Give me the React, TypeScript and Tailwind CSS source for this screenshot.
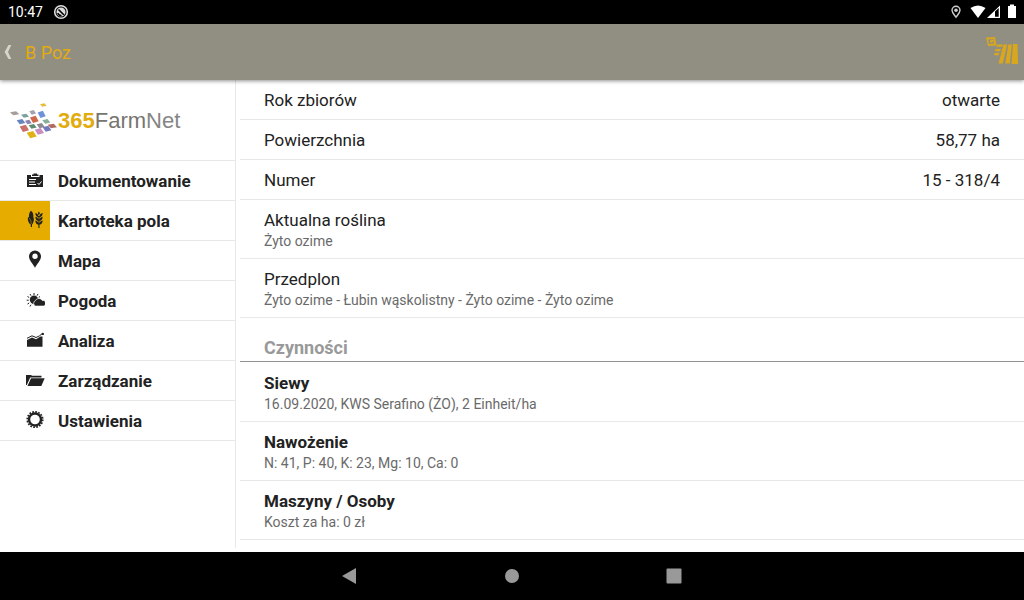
import type { ReactNode } from "react";
import { clsx } from "clsx";

const menu: { label: string; active?: boolean; icon: ReactNode }[] = [
  {
    label: "Dokumentowanie",
    icon: (
      <>
        <path fill="currentColor" d="M2 5h4v2h8.500V5H18v12H2z" />
        <path fill="currentColor" d="M7 4.500h1.500v-1h3.500v1h1.500V6H7z" />
        <path stroke="#fff" strokeWidth="1" fill="none" d="M4 9.500h7M4 12h6M4 14.500h7M12.500 13l1.500 1.500 2.500-3" />
      </>
    ),
  },
  {
    label: "Kartoteka pola",
    active: true,
    icon: (
      <>
        <path fill="currentColor" d="M6 .7c2 1.200 2.600 4 2.300 6.500 1 1.200.8 5-1.300 7.300v2.500H5.800v-2.500C3.500 13.500 2.400 9.500 3 7c.4 0 .8.300 1 .7C3.800 4.500 4.300 2 6 .7z" />
        <path stroke="#e6ad00" strokeWidth=".5" fill="none" d="M4 8c1.800 1.500 2 3.500 2.300 6" />
        <path fill="currentColor" d="M13.900 1.500c1.200 1.200 1.200 2.500 0 3.800-1.200-1.300-1.200-2.600 0-3.800zM10.400 3c2.300.4 3.200 1.900 3.100 4.200-2.300-.3-3.200-1.900-3.100-4.200zM17.600 3c-2.300.4-3.300 1.900-3.200 4.200 2.300-.3 3.300-1.900 3.200-4.200zM10.400 6.700c2.300.4 3.200 2 3.100 4.200-2.300-.3-3.200-2-3.100-4.200zM17.600 6.700c-2.300.4-3.300 2-3.200 4.200 2.300-.3 3.300-2 3.200-4.200zM10.400 10.500c2.300.4 3.200 2 3.100 4.200-2.300-.3-3.200-2-3.100-4.200zM17.600 10.500c-2.300.4-3.300 2-3.200 4.200 2.300-.3 3.300-2 3.200-4.200zM13.400 6h1.100v12h-1.100z" />
      </>
    ),
  },
  {
    label: "Mapa",
    icon: (
      <path
        fill="currentColor"
        fillRule="evenodd"
        d="M10 .4a6 6 0 0 1 6 6c0 3.600-3.700 7-6 11.300C7.700 13.400 4 10 4 6.400a6 6 0 0 1 6-6zm0 3.200a2.700 2.700 0 1 0 0 5.400 2.700 2.700 0 0 0 0-5.400z"
      />
    ),
  },
  {
    label: "Pogoda",
    icon: (
      <>
        <path stroke="currentColor" strokeWidth="1" d="M9 3v2M5 4l1 1.700M13 4l-1 1.700M2.500 6.500l1.700 1M1.700 10.200h2M2.500 14l1.700-1M5 16.500l1-1.700M15 6.500l-1.300 1" />
        <circle cx="9" cy="9.800" r="4.200" fill="currentColor" />
        <path
          fill="currentColor"
          stroke="#fff"
          strokeWidth=".7"
          d="M10.500 16.100a2.900 2.900 0 0 1-.1-5.400A3.800 3.800 0 0 1 17.200 10.400a2.900 2.900 0 0 1 1.200 5.700z"
        />
      </>
    ),
  },
  {
    label: "Analiza",
    icon: (
      <>
        <path fill="currentColor" d="M2 10l5-2.500 4 1.700 4.500-2.700H17.500v10.200H2z" />
        <path stroke="currentColor" strokeWidth="1" fill="none" d="M2 8.300L7 5.800l4 1.700 3.500-1.700 3-2.300" />
        <circle cx="17.800" cy="3.900" r="1.200" fill="currentColor" />
      </>
    ),
  },
  {
    label: "Zarządzanie",
    icon: (
      <>
        <path fill="currentColor" d="M1 5h5l1 .7h9.500v1.700H5.200L1.800 15H1z" />
        <path fill="currentColor" d="M6 8.200h13.700L16.300 16H2.500z" />
      </>
    ),
  },
  {
    label: "Ustawienia",
    icon: (
      <>
        <circle cx="10" cy="9.500" r="6" fill="none" stroke="currentColor" strokeWidth="2.400" />
        <circle cx="10" cy="9.500" r="7.700" fill="none" stroke="currentColor" strokeWidth="1.800" strokeDasharray="1.700 1.324" />
      </>
    ),
  },
];

const facts: { label: string; value?: string; note?: string }[] = [
  { label: "Rok zbiorów", value: "otwarte" },
  { label: "Powierzchnia", value: "58,77 ha" },
  { label: "Numer", value: "15 - 318/4" },
  { label: "Aktualna roślina", note: "Żyto ozime" },
  { label: "Przedplon", note: "Żyto ozime - Łubin wąskolistny - Żyto ozime - Żyto ozime" },
];

const activities = [
  { title: "Siewy", note: "16.09.2020, KWS Serafino (ŻO), 2 Einheit/ha" },
  { title: "Nawożenie", note: "N: 41, P: 40, K: 23, Mg: 10, Ca: 0" },
  { title: "Maszyny / Osoby", note: "Koszt za ha: 0 zł" },
];

// x, y (centre), half width, half height, colour
const tiles: [number, number, number, number, string][] = [
  [115, 24, 10, 5, "#e5bd3a"],
  [29, 49, 14, 6, "#a69d98"],
  [60, 56, 12, 6, "#7aa09d"],
  [83, 46, 10, 7, "#a5a1ae"],
  [110, 52, 12, 11, "#6f93d8"],
  [48, 74, 13, 8, "#6684bd"],
  [70, 75, 10, 7, "#8b83ad"],
  [88, 67, 13, 11, "#d0674a"],
  [124, 73, 12, 7, "#86b09a"],
  [58, 94, 14, 11, "#cb6f69"],
  [83, 88, 12, 7, "#5f8b70"],
  [107, 86, 12, 8, "#8d8b91"],
  [142, 87, 14, 7, "#b06a62"],
  [103, 103, 14, 10, "#c98dc0"],
  [126, 95, 13, 9, "#7379bd"],
  [80, 113, 15, 11, "#e0b117"],
];

function StatusBar() {
  return (
    <div className="flex h-6 shrink-0 items-center bg-black pl-2 pr-[6px] text-white">
      <time className="text-sm">10:47</time>
      <svg className="ml-[10px] size-4" viewBox="0 0 16 16">
        <circle cx="8" cy="8" r="6.300" fill="none" stroke="#ddd" strokeWidth="1.600" />
        <circle cx="8" cy="8" r="4.500" fill="#ddd" />
        <path d="M5.500 5.500l5.500 5.500M5 9a3 3 0 0 0 3.500 2.500" fill="none" stroke="#000" strokeWidth="1.600" />
      </svg>
      <div className="ml-auto flex items-center">
        <svg className="h-4 w-3" viewBox="0 0 12 16">
          <path d="M6 2.200a4 4 0 0 1 4 4c0 2.500-2.500 4.800-4 7-1.500-2.200-4-4.500-4-7a4 4 0 0 1 4-4z" fill="none" stroke="#ccc" strokeWidth="1.400" />
          <circle cx="6" cy="6.200" r="1.800" fill="#ccc" />
        </svg>
        <svg className="ml-2 size-4" viewBox="0 0 16 16">
          <path d="M8 14L.5 4Q8-1 15.500 4z" fill="#fff" />
        </svg>
        <svg className="size-4" viewBox="0 0 16 16">
          <path fillRule="evenodd" d="M1 14L14 1.500V14zM9 7.500V12.800h3.700V4z" fill="#fff" />
        </svg>
        <svg className="ml-1 h-4 w-3" viewBox="0 0 12 16">
          <path d="M4 .500h4v1.500h2v12H2V2h2z" fill="#fff" />
        </svg>
      </div>
    </div>
  );
}

function AppBar() {
  return (
    <header className="z-10 flex h-14 shrink-0 items-center bg-[#918f81] pr-[5px] shadow-[0_1px_4px_rgba(0,0,0,0.45)]">
      <button type="button" aria-label="Wstecz" className="flex h-full w-[25px] items-center pl-1">
        <svg className="h-4 w-2" viewBox="0 0 8 16">
          <path d="M4.500 1h2.800L4 8l3.300 7H4.500L.6 8z" fill="#d5d4cd" />
        </svg>
      </button>
      <h1 className="text-[18px] text-[#e3ab10]">B Poz</h1>
      <button type="button" aria-label="365FarmNet" className="ml-auto">
        <svg className="h-8 w-[34px] text-[#d9a71d]" viewBox="0 0 34 32" fill="currentColor">
          <path fillRule="evenodd" d="M1 1.500l9-.5 1.500 8.500-8.500.5zM3 3.500l1 4.500 5-.5-.8-4.500z" />
          <path d="M4.500 5l2.500-1.500L9 5 6 7z" />
          <path d="M12 8.500h6l-1 2.200h-6zM10.500 13H16l-1 2.200H9.500zM9.500 17h5l-1 2.200H9z" />
          <path d="M18.500 8.500h3.700L17.700 27.500h-4.200zM23.300 8.500h3.500l-2 19h-4.500zM28 8h4.500L33 28h-6.500z" />
        </svg>
      </button>
    </header>
  );
}

function Logo() {
  return (
    <a href="#start" aria-label="365FarmNet" className="flex h-[81px] items-center border-b border-[#e8e8e8] pl-[5px]">
      <svg className="h-[46px] w-[56px] shrink-0" viewBox="0 0 168 138">
        {tiles.map(([x, y, w, h, color], i) => (
          <path
            key={i}
            fill={color}
            d={`M${x - w} ${y - h * 0.5}L${x + w * 0.3} ${y - h}L${x + w} ${y + h * 0.5}L${x - w * 0.3} ${y + h}z`}
          />
        ))}
      </svg>
      <span className="-ml-[3px] font-['Liberation_Sans',Arial,sans-serif] text-[22px] text-[#858585]">
        <b className="text-[#e2ab0e]">365</b>
        <span className="text-[#77756f]">Farm</span>Net
      </span>
    </a>
  );
}

function Sidebar() {
  return (
    <nav className="mb-1 w-[236px] shrink-0 border-r border-[#e8e8e8]">
      <Logo />
      <ul>
        {menu.map((item) => (
          <li key={item.label} className="h-10 border-b border-[#e8e8e8]">
            <a href="#menu" aria-current={item.active ? "page" : undefined} className="flex h-full gap-2 font-bold">
              <span className={clsx("w-[50px] pl-[25px] pt-[9px]", item.active && "bg-[#e6ad00]")}>
                <svg className="size-5" viewBox="0 0 20 20">{item.icon}</svg>
              </span>
              <span className="pt-[9px] text-[17px] leading-[22px]">{item.label}</span>
            </a>
          </li>
        ))}
      </ul>
    </nav>
  );
}

function FieldDetails() {
  return (
    <main className="ml-1 min-w-0 flex-1 overflow-hidden">
      <dl>
        {facts.map(({ label, value, note }) => (
          <div
            key={label}
            className={clsx("border-b border-[#e8e8e8] px-6 pt-[9px]", note ? "pb-[7px]" : "flex justify-between pb-2")}
          >
            <dt className="text-[17px] leading-[22px]">{label}</dt>
            {value && <dd className="text-[17px] leading-[22px]">{value}</dd>}
            {note && <dd className="text-sm leading-5 text-[#6a6a6a]">{note}</dd>}
          </div>
        ))}
      </dl>
      <h2 className="mb-px border-b border-[#929292] px-6 pb-[2px] pt-[19px] text-[18px] font-bold leading-[22px] text-[#999]">
        Czynności
      </h2>
      <ul>
        {activities.map(({ title, note }) => (
          <li key={title} className="border-b border-[#e8e8e8] px-6 pb-[7px] pt-[9px]">
            <h3 className="text-[17px] font-bold leading-[22px]">{title}</h3>
            <p className="text-sm leading-5 text-[#6a6a6a]">{note}</p>
          </li>
        ))}
      </ul>
    </main>
  );
}

function SystemNav() {
  return (
    <div className="flex h-12 shrink-0 items-center justify-center gap-[138px] bg-black text-[#999]">
      <button type="button" aria-label="Wstecz">
        <svg className="size-6" viewBox="0 0 24 24" fill="currentColor">
          <path d="M18 4v16L4 12z" />
        </svg>
      </button>
      <button type="button" aria-label="Ekran główny">
        <svg className="size-6" viewBox="0 0 24 24" fill="currentColor">
          <circle cx="12" cy="12" r="7" />
        </svg>
      </button>
      <button type="button" aria-label="Ostatnie">
        <svg className="size-6" viewBox="0 0 24 24" fill="currentColor">
          <rect x="4.500" y="4.500" width="15" height="15" rx="1" />
        </svg>
      </button>
    </div>
  );
}

export default function App() {
  return (
    <div className="flex h-screen flex-col bg-white font-[Roboto,sans-serif] text-[#222]">
      <StatusBar />
      <AppBar />
      <div className="flex min-h-0 flex-1">
        <Sidebar />
        <FieldDetails />
      </div>
      <SystemNav />
    </div>
  );
}
